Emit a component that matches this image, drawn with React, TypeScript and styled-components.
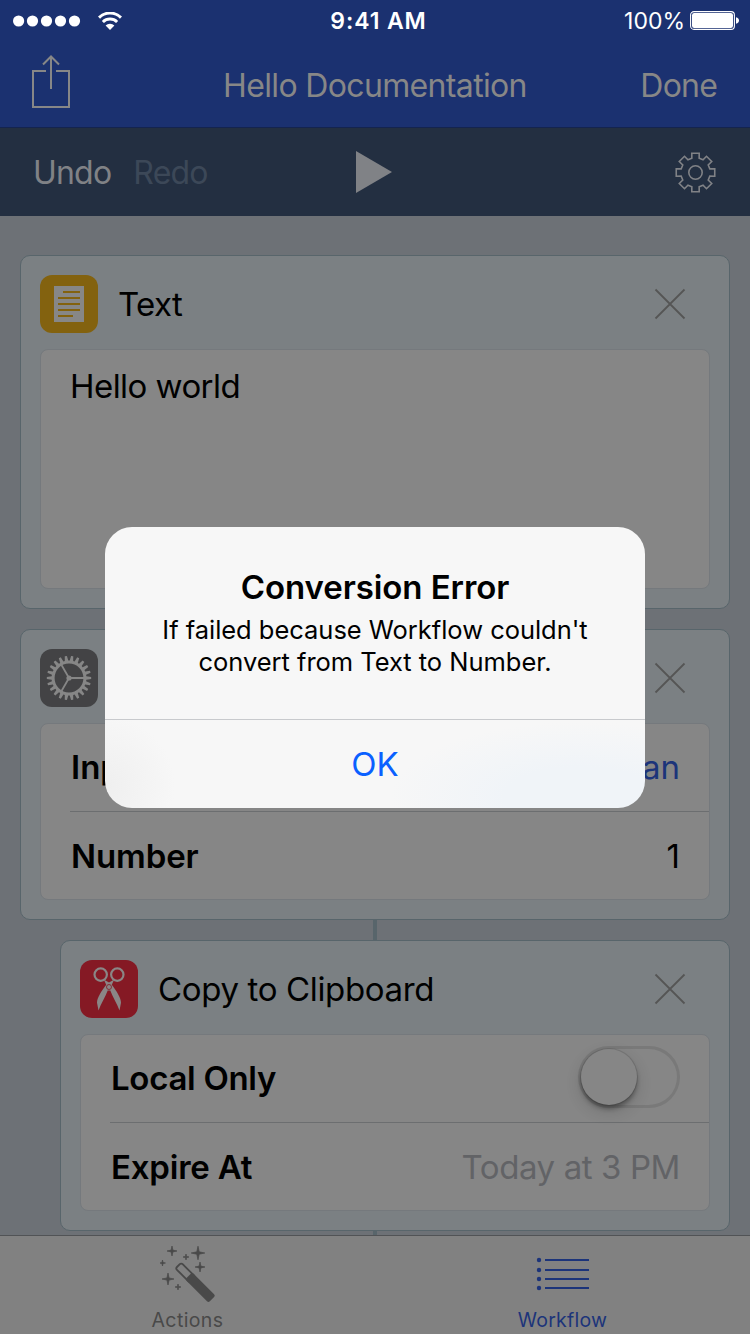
import React from 'react';
import styled, { createGlobalStyle } from 'styled-components';

const color = {
  nav: '#1b3170',
  navLine: '#14244f',
  navText: '#878787',
  toolbar: '#232f41',
  toolbarText: '#808286',
  toolbarMuted: '#3c4858',
  page: '#6d7176',
  card: '#7b8083',
  cardLine: '#58656b',
  field: '#868686',
  fieldLine: '#75797d',
  rowLine: '#6c6e70',
  blue: '#1c347a',
  cross: '#555555',
};

const GlobalStyle = createGlobalStyle`
  * { box-sizing: border-box; }
  body { margin: 0; background: ${color.page}; }
`;

const Screen = styled.div`
  position: relative;
  display: flex;
  flex-direction: column;
  width: 750px;
  height: 1334px;
  overflow: hidden;
  background: ${color.page};
  color: #000;
  font-family: Inter, 'Liberation Sans', sans-serif;
  font-size: 33px;
  line-height: 40px;

  svg { display: block; flex: none; }
`;

const Text = styled.span<{ $track?: number; $weight?: number }>`
  white-space: nowrap;
  letter-spacing: ${(p) => p.$track ?? 0}px;
  font-weight: ${(p) => p.$weight ?? 400};
`;

const StatusBar = styled.header`
  display: grid;
  grid-template-columns: 1fr auto 1fr;
  align-items: center;
  height: 40px;
  padding: 1px 11px 0 13px;
  background: ${color.nav};
  color: #fff;
  font-size: 23px;
  line-height: 28px;
`;

const Clock = styled(Text)`
  margin-left: 5px;
`;

const StatusGroup = styled.div<{ $end?: boolean }>`
  display: flex;
  align-items: center;
  justify-content: ${(p) => (p.$end ? 'flex-end' : 'flex-start')};
  gap: ${(p) => (p.$end ? 5 : 17)}px;
`;

const NavBar = styled.nav`
  display: grid;
  grid-template-columns: 1fr auto 1fr;
  align-items: center;
  height: 88px;
  padding: 4px 33px 0 31px;
  border-bottom: 1px solid ${color.navLine};
  background: ${color.nav};
  color: ${color.navText};
  font-size: 32px;

  > svg { margin-bottom: 8px; }
`;

const NavTitle = styled(Text)`
  margin-left: 2px;
`;

const NavEnd = styled.div`
  display: flex;
  justify-content: flex-end;
`;

const Toolbar = styled.div`
  display: grid;
  grid-template-columns: 1fr auto 1fr;
  align-items: center;
  height: 88px;
  padding: 0 33px;
  background: ${color.toolbar};
  color: ${color.toolbarText};
  font-size: 32px;
`;

const ToolbarActions = styled.div`
  display: flex;
  gap: 22px;
  padding-top: 2px;
`;

const Redo = styled(Text)`
  color: ${color.toolbarMuted};
`;

const Flow = styled.main`
  flex: 1;
  display: flex;
  flex-direction: column;
  min-height: 0;
  overflow: hidden;
  padding: 39px 20px 0;
`;

const Card = styled.section<{ $nested?: boolean }>`
  flex: none;
  margin-left: ${(p) => (p.$nested ? 40 : 0)}px;
  padding: 19px;
  border: 1px solid ${color.cardLine};
  border-radius: 10px;
  background: ${color.card};
`;

const Gap = styled.div<{ $linked?: boolean }>`
  flex: none;
  align-self: center;
  width: 4px;
  height: 20px;
  background: ${(p) => (p.$linked ? color.cardLine : 'transparent')};
`;

const CardHead = styled.div`
  display: flex;
  align-items: center;
  height: 58px;
  margin-bottom: 16px;
  padding-right: 24px;
`;

const CardTitle = styled(Text)`
  flex: 1;
  margin-left: 20px;
`;

const Badge = styled.div<{ $fill: string }>`
  width: 58px;
  height: 58px;
  border-radius: 12px;
  background: ${(p) => p.$fill};
`;

const FieldBox = styled.div`
  border: 1px solid ${color.fieldLine};
  border-radius: 8px;
  background: ${color.field};
`;

const TextArea = styled(FieldBox)`
  height: 240px;
  padding: 16px 29px;
`;

const Row = styled.div`
  display: flex;
  align-items: center;
  justify-content: space-between;
  height: 87px;
  margin-left: 29px;
  padding: 0 29px 2px 1px;

  & + & {
    height: 88px;
    padding-bottom: 0;
    border-top: 1px solid ${color.rowLine};
  }
`;

const Value = styled(Text)<{ $tone?: string }>`
  color: ${(p) => p.$tone ?? '#000'};
`;

const Switch = styled.div`
  width: 102px;
  height: 62px;
  padding: 3px;
  margin-top: -2px;
  border-radius: 31px;
  box-shadow: inset 0 0 0 3px #797979;
`;

const Knob = styled.div`
  width: 56px;
  height: 56px;
  border-radius: 50%;
  background: ${color.field};
  box-shadow: 0 0 0 1px rgba(0, 0, 0, 0.1), 0 6px 16px rgba(0, 0, 0, 0.16), 0 4px 4px rgba(0, 0, 0, 0.3);
`;

const TabBar = styled.footer`
  display: flex;
  flex: none;
  height: 99px;
  border-top: 1px solid #515356;
  background: #818181;
  font-size: 19.5px;
  line-height: 24px;
`;

const Tab = styled.div<{ $active?: boolean }>`
  display: flex;
  flex: 1;
  flex-direction: column;
  align-items: center;
  gap: 3px;
  padding-top: 9px;
  color: ${(p) => (p.$active ? color.blue : '#494949')};
`;

const Dialog = styled.div`
  position: absolute;
  top: 527px;
  left: 105px;
  width: 540px;
  height: 281px;
  display: flex;
  flex-direction: column;
  border-radius: 27px;
  overflow: hidden;
  background:
    radial-gradient(circle at 0 92%, rgba(238, 238, 238, 0.9) 0, rgba(238, 238, 238, 0) 70px),
    radial-gradient(ellipse 190px 75px at 88% 96%, #f0f4f8 40%, rgba(240, 244, 248, 0)),
    #f7f7f7;
  text-align: center;
`;

const DialogBody = styled.div`
  display: flex;
  flex-direction: column;
  height: 192px;
  padding-top: 40px;
`;

const DialogMessage = styled.p`
  margin: 7px 0 0;
  font-size: 25.5px;
  line-height: 32px;
  letter-spacing: -0.03px;
`;

const DialogButton = styled.button`
  flex: 1;
  padding: 0;
  border: 0;
  border-top: 1px solid #c8cacd;
  background: none;
  color: #0a60ff;
  font: inherit;
`;

type Point = [number, number];

const polar = (r: number, a: number): Point => [r * Math.cos(a), r * Math.sin(a)];

/* Closed outline of a cog centred on the origin; tip and root are half-angles in radians. */
function cogPath(teeth: number, outer: number, inner: number, tip: number, root: number) {
  const points: Point[] = [];
  for (let i = 0; i < teeth; i += 1) {
    const a = (i / teeth) * Math.PI * 2;
    points.push(polar(inner, a - root), polar(outer, a - tip), polar(outer, a + tip), polar(inner, a + root));
  }
  return `M${points.map(([x, y]) => `${x.toFixed(2)} ${y.toFixed(2)}`).join('L')}Z`;
}

const SignalIcon = () => (
  <svg width="68" height="12" viewBox="0 0 68 12" fill="#fff">
    {[5.6, 19.5, 33.5, 47.5, 61.5].map((x) => (
      <circle key={x} cx={x} cy="6" r="5.6" />
    ))}
  </svg>
);

const WifiIcon = () => (
  <svg width="24" height="18" viewBox="0 0 24 18" fill="none" stroke="#fff" strokeWidth="3">
    <path d="M1 5.6a15.6 15.6 0 0 1 22 0" />
    <path d="M4.9 10a10.2 10.2 0 0 1 14.2 0" />
    <path d="M12 18l-4.4-4.4a6.3 6.3 0 0 1 8.8 0z" fill="#fff" stroke="none" />
  </svg>
);

const BatteryIcon = () => (
  <svg width="49" height="19" viewBox="0 0 49 19">
    <rect x="0.6" y="0.6" width="43.8" height="17.8" rx="3.4" fill="none" stroke="#fff" strokeWidth="1.1" />
    <rect x="2" y="2" width="41" height="15" rx="2.2" fill="#fff" />
    <path d="M46 6.2c4 .6 4 6 0 6.6z" fill="#fff" />
  </svg>
);

const ShareIcon = () => (
  <svg width="40" height="54" viewBox="0 0 40 54" fill="none" stroke={color.navText} strokeWidth="2">
    <path d="M15 16H2v36h36V16H25" />
    <path d="M20 34V2M12 9.5L20 1.5l8 8" />
  </svg>
);

const PlayIcon = () => (
  <svg width="38" height="42" viewBox="0 0 38 42" fill="#808286">
    <path d="M0 0l36 21L0 42z" />
  </svg>
);

const SettingsIcon = () => (
  <svg width="42" height="42" viewBox="-20.5 -21.5 42 42" fill="none" stroke={color.toolbarText} strokeWidth="1.6">
    <path d={cogPath(8, 19.6, 14.8, 0.19, 0.25)} />
    <circle r="6.7" />
  </svg>
);

const CrossIcon = () => (
  <svg width="32" height="32" viewBox="0 0 32 32" stroke={color.cross} strokeWidth="1.8">
    <path d="M1.5 1.5l29 29M30.5 1.5l-29 29" />
  </svg>
);

const TextBadge = () => (
  <Badge $fill="#83620f">
    <svg width="58" height="58" viewBox="0 0 58 58">
      <rect x="14" y="11" width="30" height="36" fill="#878787" />
      <path d="M23 17h17M18 23h22M18 29h22M18 35h22M18 41h15" stroke="#83620f" strokeWidth="2" />
    </svg>
  </Badge>
);

const CogBadge = () => (
  <Badge $fill="#434345">
    <svg width="58" height="58" viewBox="-29 -29 58 58" fill="#868686">
      <path
        fillRule="evenodd"
        d={`${cogPath(22, 22.2, 17.4, 0.05, 0.1)}M14.4 0A14.4 14.4 0 1 0-14.4 0A14.4 14.4 0 1 0 14.4 0Z`}
      />
      <path d="M0 0H15M0 0L-7.5-13M0 0L-7.5 13" stroke="#868686" strokeWidth="1.8" />
      <circle r="2.6" />
    </svg>
  </Badge>
);

const ScissorsBadge = () => (
  <Badge $fill="#851924">
    <svg width="58" height="58" viewBox="0 0 58 58">
      <g fill="none" stroke="#8a8686" strokeWidth="2.2">
        <circle cx="20.7" cy="14.6" r="6.2" />
        <circle cx="37.3" cy="14.6" r="6.2" />
      </g>
      <path
        d="M23.8 19.6L29 22.4l5.2-2.8-2.4 5.2c5 6.8 9.2 13 9.2 18L39.5 50.5C37 43 32.5 37 30.3 30.5h-2.6C25.5 37 21 43 18.5 50.5L17 42.8c0-5 4.2-11.2 9.2-18z"
        fill="#8a8686"
      />
      <circle cx="29" cy="27" r="2.5" fill="#8a8686" stroke="#851924" strokeWidth="0.8" />
    </svg>
  </Badge>
);

const sparkle = (x: number, y: number, r: number) => {
  const k = r * 0.18;
  return `M${x} ${y - r}L${x + k} ${y - k}L${x + r} ${y}L${x + k} ${y + k}L${x} ${y + r}L${x - k} ${y + k}L${x - r} ${y}L${x - k} ${y - k}Z`;
};

const sparkles: [number, number, number][] = [
  [12, 6, 5],
  [38, 8, 6.8],
  [26, 12, 3],
  [2.5, 18, 3],
  [40, 22, 5],
  [8, 34, 6],
  [18, 42, 3],
];

const WandIcon = () => (
  <svg width="56" height="60" viewBox="0 0 56 60" fill="#494949">
    <path d={sparkles.map(([x, y, r]) => sparkle(x, y, r)).join('')} stroke="#494949" strokeWidth="0.7" />
    <g transform="translate(35 37.2) rotate(45)">
      <rect x="-23.5" y="-4" width="20" height="8" rx="2" fill="none" stroke="#494949" strokeWidth="1.8" />
      <rect x="-9" y="-5" width="33" height="10" rx="2" />
    </g>
  </svg>
);

const ListIcon = () => (
  <svg width="54" height="60" viewBox="0 0 54 60" fill={color.blue}>
    {[15, 25, 34, 43].map((y) => (
      <g key={y}>
        <circle cx="3" cy={y} r="2.2" />
        <rect x="9" y={y - 1} width="44" height="2" />
      </g>
    ))}
  </svg>
);

export default function App() {
  return (
    <>
      <GlobalStyle />
      <Screen>
        <StatusBar>
          <StatusGroup>
            <SignalIcon />
            <WifiIcon />
          </StatusGroup>
          <Clock $weight={600} $track={0.9}>9:41 AM</Clock>
          <StatusGroup $end>
            <Text>100%</Text>
            <BatteryIcon />
          </StatusGroup>
        </StatusBar>
        <NavBar>
          <ShareIcon />
          <NavTitle $track={-0.65}>Hello Documentation</NavTitle>
          <NavEnd>
            <Text $track={-0.8}>Done</Text>
          </NavEnd>
        </NavBar>
        <Toolbar>
          <ToolbarActions>
            <Text $track={-0.8}>Undo</Text>
            <Redo $track={-0.8}>Redo</Redo>
          </ToolbarActions>
          <PlayIcon />
          <NavEnd>
            <SettingsIcon />
          </NavEnd>
        </Toolbar>
        <Flow>
          <Card>
            <CardHead>
              <TextBadge />
              <CardTitle $track={-0.6}>Text</CardTitle>
              <CrossIcon />
            </CardHead>
            <TextArea>
              <Text $track={-0.55}>Hello world</Text>
            </TextArea>
          </Card>
          <Gap />
          <Card>
            <CardHead>
              <CogBadge />
              <CardTitle>If</CardTitle>
              <CrossIcon />
            </CardHead>
            <FieldBox>
              <Row>
                <Text $weight={600}>Input</Text>
                <Value $tone={color.blue}>Is Greater Than</Value>
              </Row>
              <Row>
                <Text $weight={600} $track={-0.1}>Number</Text>
                <Value>1</Value>
              </Row>
            </FieldBox>
          </Card>
          <Gap $linked />
          <Card $nested>
            <CardHead>
              <ScissorsBadge />
              <CardTitle $track={-0.35}>Copy to Clipboard</CardTitle>
              <CrossIcon />
            </CardHead>
            <FieldBox>
              <Row>
                <Text $weight={600} $track={-0.3}>Local Only</Text>
                <Switch>
                  <Knob />
                </Switch>
              </Row>
              <Row>
                <Text $weight={600} $track={-0.2}>Expire At</Text>
                <Value $tone="#626366" $track={-0.4}>Today at 3 PM</Value>
              </Row>
            </FieldBox>
          </Card>
          <Gap $linked />
        </Flow>
        <TabBar>
          <Tab>
            <WandIcon />
            <Text $track={0.4}>Actions</Text>
          </Tab>
          <Tab $active>
            <ListIcon />
            <Text $track={0.25}>Workflow</Text>
          </Tab>
        </TabBar>
        <Dialog role="alertdialog">
          <DialogBody>
            <Text $weight={600} $track={-0.08}>Conversion Error</Text>
            <DialogMessage>
              If failed because Workflow couldn't
              <br />
              convert from Text to Number.
            </DialogMessage>
          </DialogBody>
          <DialogButton>OK</DialogButton>
        </Dialog>
      </Screen>
    </>
  );
}
